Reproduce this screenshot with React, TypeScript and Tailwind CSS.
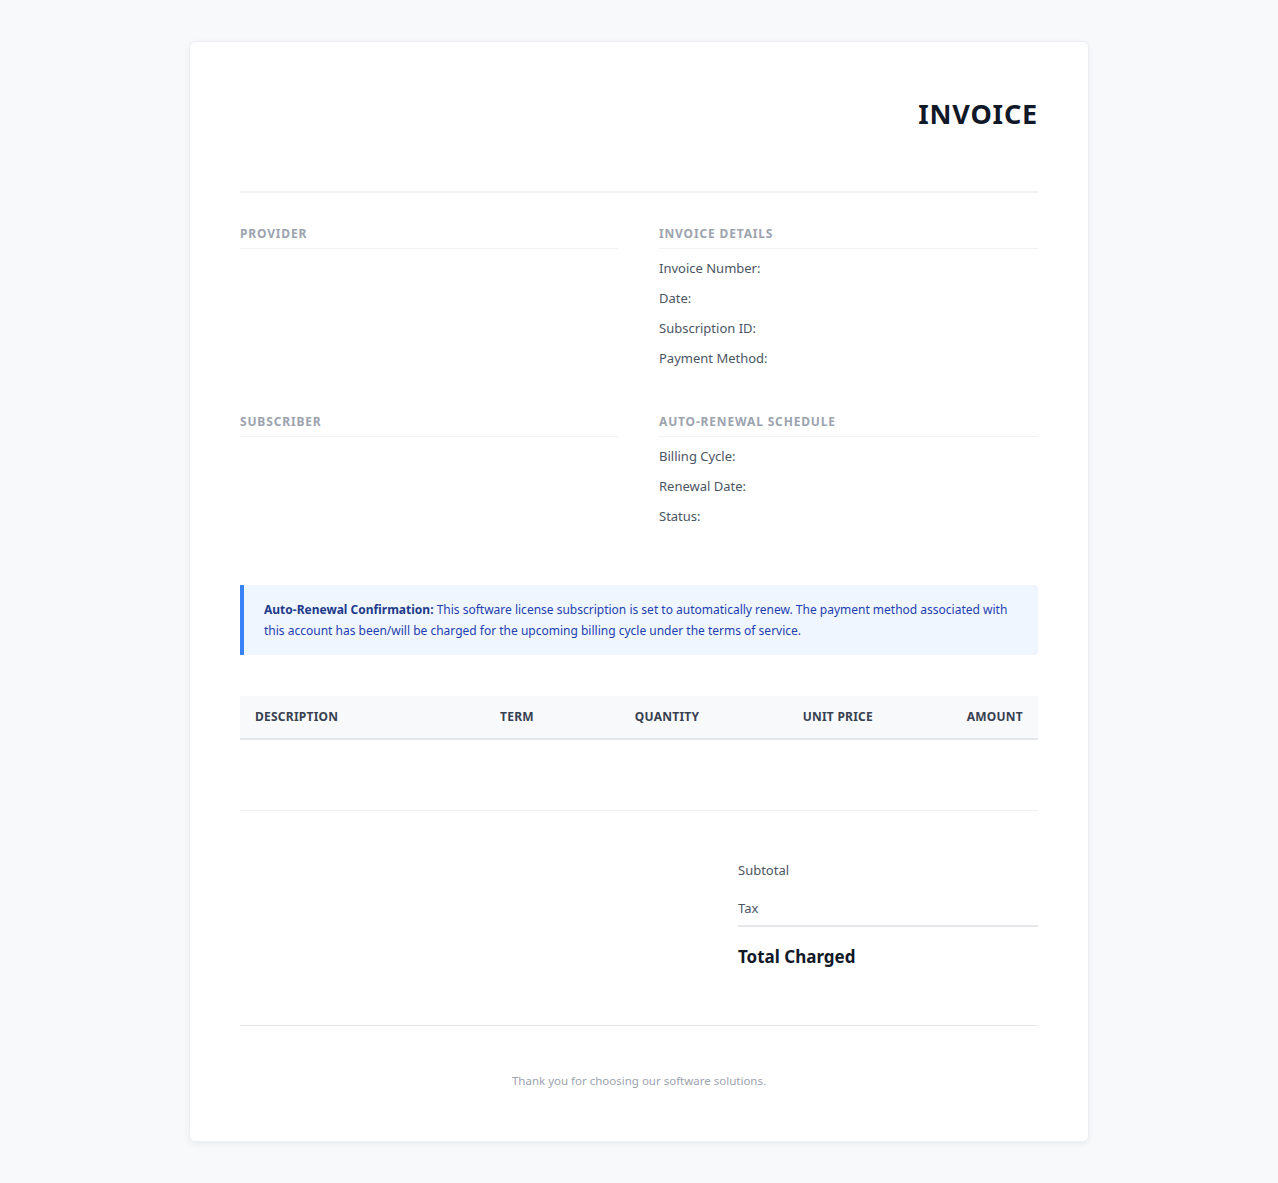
export default function App() {
  const label = "text-[12px] font-bold uppercase tracking-[0.07em] text-[#9ca3af] pb-[5px] border-b border-[#f0f1f3] mb-[4px]";
  const row = "text-[13px] text-[#4b5563] leading-[30px]";
  return (
    <div className="min-h-[1183px] bg-[#f8f9fb] pt-[41px] pb-[41px] font-['Noto_Sans',sans-serif]">
      <div className="mx-auto w-[900px] bg-white rounded-[6px] border border-[#eceef1] shadow-[0_2px_6px_rgba(0,0,0,0.06)] px-[50px] pt-[50px] pb-[50px]">
        <div className="flex justify-end border-b-2 border-[#f0f1f3] h-[101px]">
          <h1 className="text-[27px] font-bold tracking-[0.03em] text-[#111827] leading-[44px]">INVOICE</h1>
        </div>

        <div className="grid grid-cols-2 gap-x-[40px] pt-[32px]">
          <div>
            <div className={label}>Provider</div>
          </div>
          <div>
            <div className={label}>Invoice Details</div>
            <div className={row}>Invoice Number:</div>
            <div className={row}>Date:</div>
            <div className={row}>Subscription ID:</div>
            <div className={row}>Payment Method:</div>
          </div>
          <div className="mt-[40px]">
            <div className={label}>Subscriber</div>
          </div>
          <div className="mt-[40px]">
            <div className={label}>Auto-Renewal Schedule</div>
            <div className={row}>Billing Cycle:</div>
            <div className={row}>Renewal Date:</div>
            <div className={row}>Status:</div>
          </div>
        </div>

        <div className="mt-[54px] bg-[#eff6ff] border-l-4 border-[#3b82f6] rounded-r-[3px] px-[20px] py-[14px] text-[12px] leading-[21px] text-[#1e40af]">
          <strong className="font-bold text-[#1e3a8a]">Auto-Renewal Confirmation:</strong> This software license subscription is set to automatically renew. The payment method associated with this account has been/will be charged for the upcoming billing cycle under the terms of service.
        </div>

        <table className="w-full mt-[41px] border-collapse table-fixed">
          <thead>
            <tr className="bg-[#f8f9fb] border-b-2 border-[#e5e7eb] text-[12px] font-bold uppercase tracking-[0.02em] text-[#374151]">
              <th className="text-left px-[15px] h-[43px] font-bold w-[200px]">Description</th>
              <th className="text-center px-[15px] font-bold w-[154px]">Term</th>
              <th className="text-center px-[15px] font-bold w-[146px]">Quantity</th>
              <th className="text-right px-[15px] font-bold w-[148px]">Unit Price</th>
              <th className="text-right px-[15px] font-bold">Amount</th>
            </tr>
          </thead>
        </table>
        <div className="h-[71px] border-b border-[#f0f1f3]" />

        <div className="flex justify-end pt-[40px]">
          <div className="w-[300px]">
            <div className="text-[13px] text-[#4b5563] h-[38px] leading-[38px]">Subtotal</div>
            <div className="text-[13px] text-[#4b5563] h-[38px] leading-[38px] border-b-2 border-[#e5e7eb]">Tax</div>
            <div className="text-[17px] font-bold text-[#111827] pt-[16px] leading-[28px]">Total Charged</div>
          </div>
        </div>

        <div className="mt-[54px] border-t border-[#e5e7eb] pt-[45px] text-center text-[11.5px] text-[#9ca3af] leading-[20px]">
          Thank you for choosing our software solutions.
        </div>
      </div>
    </div>
  );
}
